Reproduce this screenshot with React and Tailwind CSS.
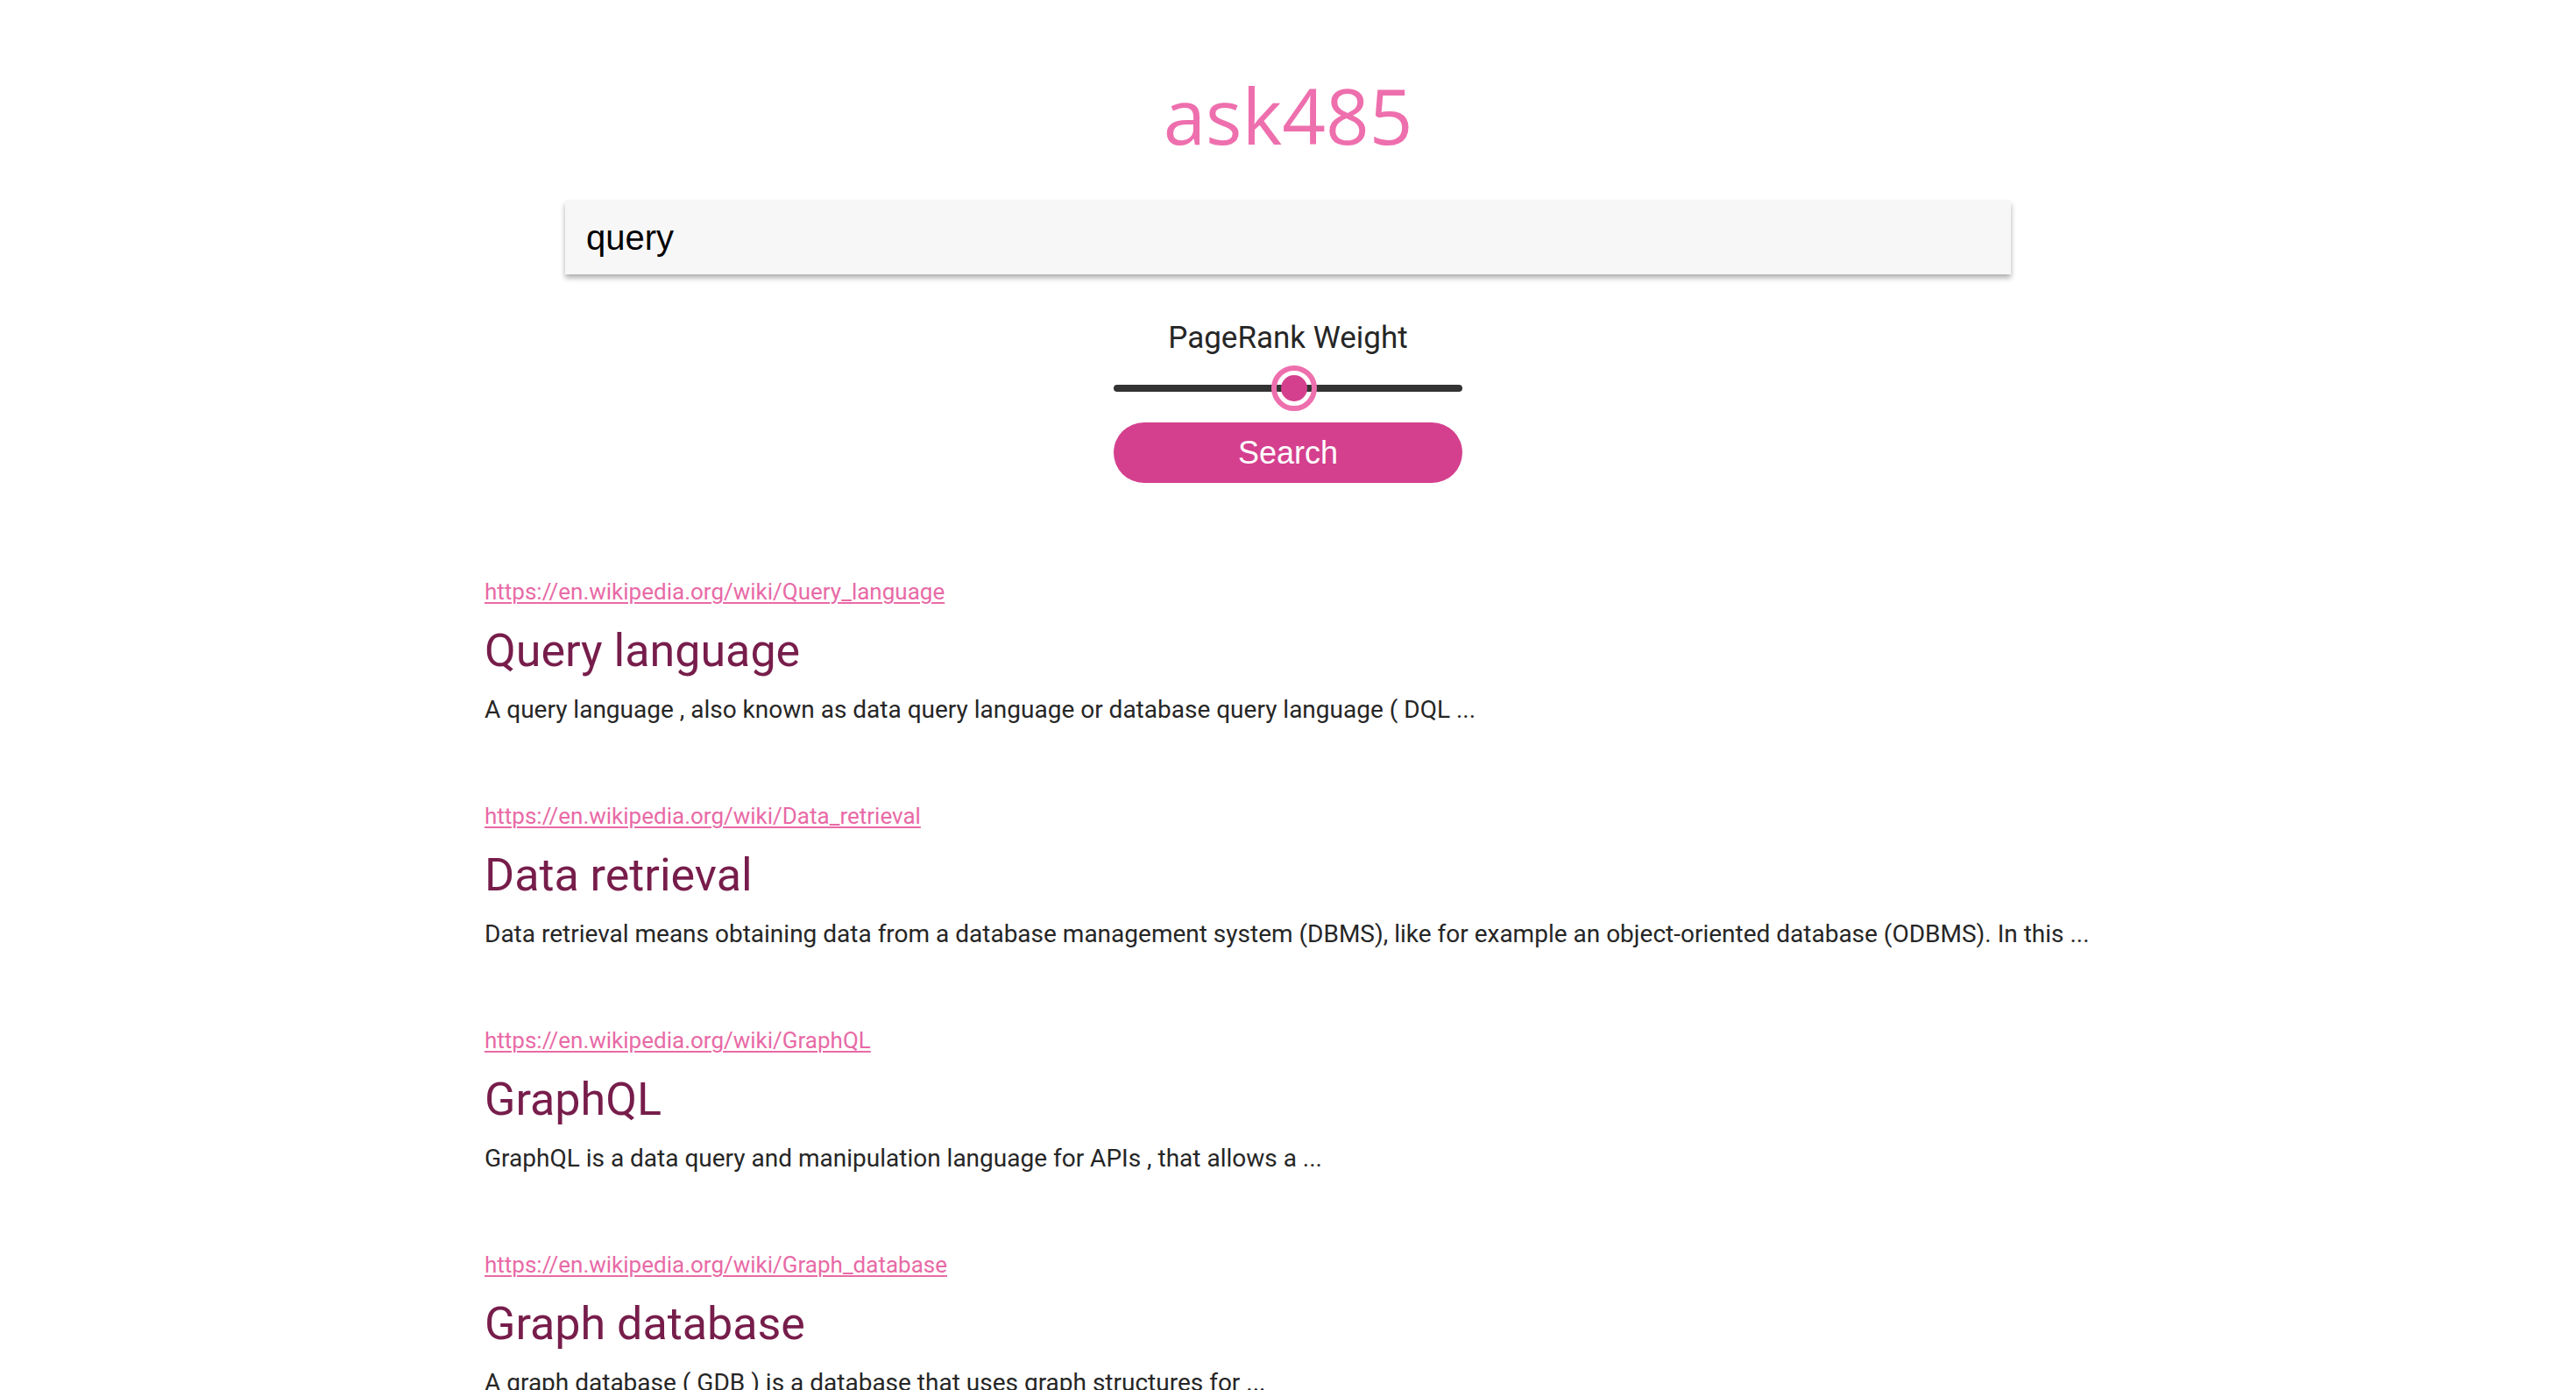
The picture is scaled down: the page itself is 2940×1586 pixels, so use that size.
import React from 'react';

const results = [
  {
    url: 'https://en.wikipedia.org/wiki/Query_language',
    title: 'Query language',
    text: 'A query language , also known as data query language or database query language ( DQL ...',
  },
  {
    url: 'https://en.wikipedia.org/wiki/Data_retrieval',
    title: 'Data retrieval',
    text: 'Data retrieval means obtaining data from a database management system (DBMS), like for example an object-oriented database (ODBMS). In this ...',
  },
  {
    url: 'https://en.wikipedia.org/wiki/GraphQL',
    title: 'GraphQL',
    text: 'GraphQL is a data query and manipulation language for APIs , that allows a ...',
  },
  {
    url: 'https://en.wikipedia.org/wiki/Graph_database',
    title: 'Graph database',
    text: 'A graph database ( GDB ) is a database that uses graph structures for ...',
  },
];

const Result = ({ item }) => (
  <div className="mb-[83px]">
    <a href="#" className="block text-[26px] leading-[36px] text-[#e86aa6] underline underline-offset-[3px] decoration-[1.5px] w-fit">
      {item.url}
    </a>
    <h2 className="mt-[18px] text-[52px] leading-[64px] text-[#771d4b]">{item.title}</h2>
    <p className="mt-[15px] text-[28px] leading-[40px] text-[#262626]">{item.text}</p>
  </div>
);

export default function App() {
  return (
    <div className="min-h-screen bg-white font-['Roboto',sans-serif] overflow-hidden">
      <div className="flex flex-col items-center pt-[88px]">
        {/* Logo */}
        <h1 className="font-['Open_Sans',sans-serif] font-normal text-[87px] leading-none text-[#ee6fad]">ask485</h1>

        {/* Search box */}
        <div className="mt-[54px] w-[1650px] h-[84px] bg-[#f7f7f7] shadow-[0_4px_6px_rgba(0,0,0,0.32)] flex items-center px-6">
          <span className="font-['Liberation_Sans',Arial,sans-serif] text-[40px] text-black">query</span>
        </div>

        {/* PageRank slider */}
        <div className="mt-[55px] text-[35px] leading-none text-[#262626]">PageRank Weight</div>
        <div className="relative mt-[14px] w-[398px] h-[52px] flex items-center">
          <div className="w-full h-2 rounded-full bg-[#333333]"></div>
          <div className="absolute left-[180px] top-0 w-[52px] h-[52px] rounded-full border-[6px] border-[#ee6fad] p-[5px]">
            <div className="w-full h-full rounded-full bg-[#d4408e]"></div>
          </div>
        </div>

        <button className="mt-[13px] w-[398px] h-[69px] rounded-full bg-[#d4408e] text-white font-['Liberation_Sans',Arial,sans-serif] text-[36px]">
          Search
        </button>
      </div>

      {/* Results */}
      <div className="w-[1834px] mx-auto mt-[106px]">
        {results.map(r => (
          <Result key={r.url} item={r} />
        ))}
      </div>
    </div>
  );
}
